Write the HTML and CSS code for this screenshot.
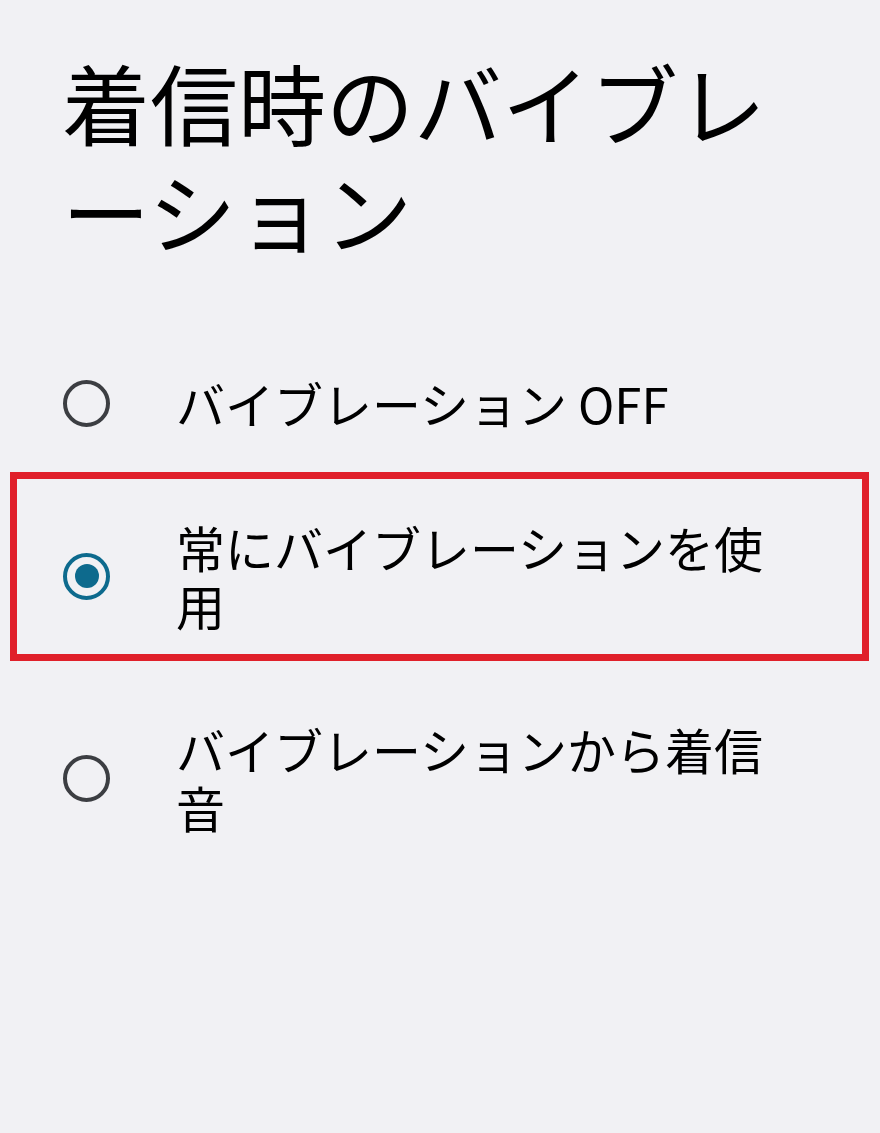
FILE: index.html
```html
<!DOCTYPE html>
<html lang="ja">
<head>
  <meta charset="UTF-8">
  <meta name="viewport" content="width=device-width, initial-scale=1.0">
  <title>着信時のバイブレーション</title>
  <link rel="stylesheet" href="styles.css">
</head>
<body>
  <h1 class="title">着信時のバイブレーション</h1>

  <div class="options">
    <label class="option">
      <span class="radio"></span>
      <span class="label">バイブレーション OFF</span>
    </label>

    <label class="option selected">
      <span class="radio checked"></span>
      <span class="label">常にバイブレーションを使用</span>
      <span class="highlight"></span>
    </label>

    <label class="option">
      <span class="radio"></span>
      <span class="label">バイブレーションから着信音</span>
    </label>
  </div>
</body>
</html>
```

FILE: styles.css
```css
body { margin: 0; background: #f1f1f4; color: #000; font-family: "Noto Sans CJK JP", "Noto Sans", sans-serif; height: 1133px; }
.title { margin: 0; padding: 47px 60px 0 62px; font-size: 88px; font-weight: 400; line-height: 108px; }
.options { margin-top: 0; padding-top: 68px; }
.option { position: relative; display: flex; align-items: center; padding: 43px 80px 43px 63px; }
.radio { flex: none; width: 39px; height: 39px; border: 4.5px solid #3c3e42; border-radius: 50%; display: flex; align-items: center; justify-content: center; margin-right: 66px; }
.radio.checked { border-color: #0d6a8d; }
.radio.checked::after { content: ""; width: 24px; height: 24px; border-radius: 50%; background: #0d6a8d; }
.label { font-size: 49px; line-height: 58px; }
.highlight { position: absolute; left: 10px; right: 11px; top: -3px; bottom: 16px; border: 7px solid #e0202a; }
```
